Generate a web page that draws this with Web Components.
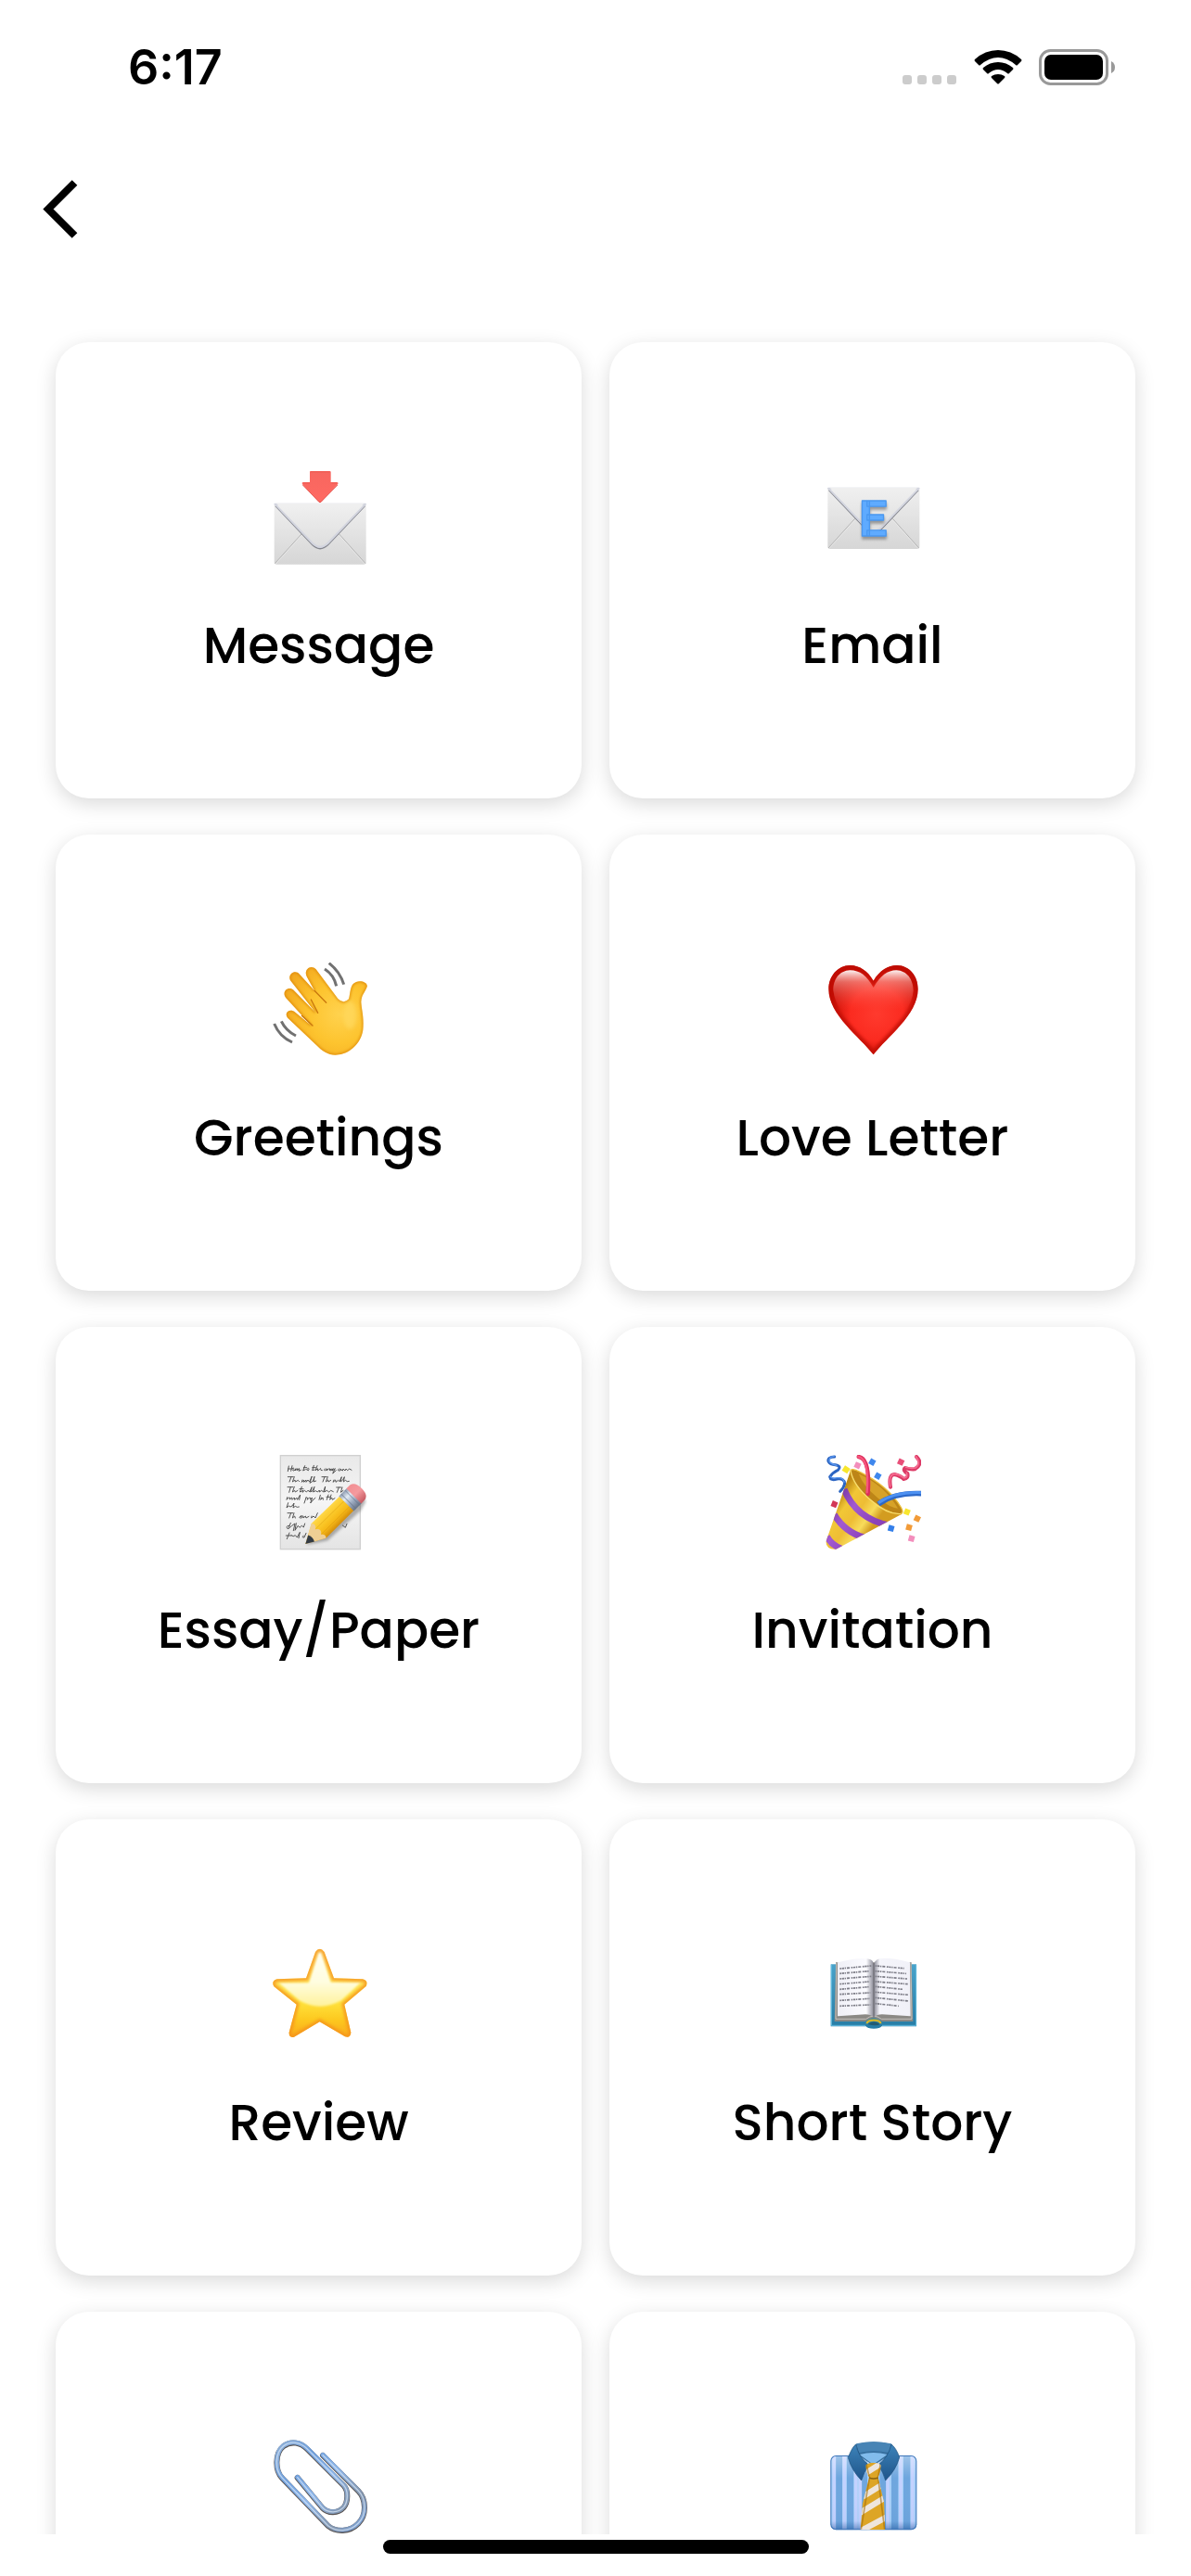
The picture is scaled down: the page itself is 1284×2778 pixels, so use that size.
<!DOCTYPE html>
<html lang="en">
<head>
<meta charset="utf-8">
<meta name="viewport" content="width=device-width, initial-scale=1">
<title>Categories</title>
<style>
  html, body { margin: 0; height: 100%; background: #fff; color: #000; }
  body { font-family: Poppins, Inter, "Liberation Sans", sans-serif; }
  category-card svg { display: block; width: 100%; height: 100%; }
</style>
</head>
<body>
<app-screen>
  <status-bar slot="top">6:17</status-bar>
  <nav-bar slot="top"></nav-bar>

  <category-card>
    <svg slot="icon" viewBox="64 48 312 312" aria-hidden="true">
      <defs>
        <linearGradient id="paper" x1="0" y1="0" x2="0" y2="1"><stop offset="0" stop-color="#efefef"/><stop offset="1" stop-color="#d6d6d6"/></linearGradient>
        <linearGradient id="flap" x1="0" y1="0" x2="0" y2="1"><stop offset="0" stop-color="#f0f0f0"/><stop offset="1" stop-color="#dedede"/></linearGradient>
        <linearGradient id="arrow" x1="0" y1="0" x2="0" y2="1"><stop offset="0" stop-color="#f7665f"/><stop offset="1" stop-color="#ff6a62"/></linearGradient>
      </defs>
      <rect x="75" y="156" width="297" height="197" rx="7" fill="url(#paper)"/>
      <path d="M77 350 163 255M370 350 285 255" stroke="#b4b4b4" stroke-width="3"/>
      <path d="M79 352 163 259M368 352 285 259" stroke="#f3f3f3" stroke-width="1.5"/>
      <path d="M79 163 199 290Q223 313 248 290L368 163" fill="none" stroke="#85878f" stroke-width="5"/>
      <path d="M77 158 199 285Q223 308 248 285L370 158Z" fill="url(#flap)" stroke="#d3d5df" stroke-width="6" stroke-linejoin="round"/>
      <path d="M82 156H365L352 168H95Z" fill="#efefef"/>
      <path d="M190 53Q190 51 193 51H254Q258 51 258 54V87H278Q284 88 281 93L227 151Q223 156 219 151L167 95Q162 88 169 87H190Z" fill="url(#arrow)"/>
      <path d="M192 54H255M169 90H190M260 90H279" stroke="#e8594f" stroke-width="3" opacity=".7"/>
      <path d="M167 96 219 150Q223 154 227 150L280 96" fill="none" stroke="#e04a42" stroke-width="3" opacity=".8"/>
    </svg>
    Message
  </category-card>

  <category-card>
    <svg slot="icon" viewBox="56 48 312 312" aria-hidden="true">
      <rect x="66" y="105" width="297" height="198" rx="7" fill="url(#paper)"/>
      <path d="M68 300 154 205M361 300 276 205" stroke="#b4b4b4" stroke-width="3"/>
      <path d="M70 302 154 209M359 302 276 209" stroke="#f3f3f3" stroke-width="1.5"/>
      <path d="M70 112 190 239Q214 262 239 239L359 112" fill="none" stroke="#7d7f87" stroke-width="5"/>
      <path d="M68 107 190 234Q214 257 239 234L361 107Z" fill="url(#flap)" stroke="#d3d5df" stroke-width="6" stroke-linejoin="round"/>
      <path d="M73 105H356L343 117H86Z" fill="#efefef"/>
      <g font-family="Roboto, 'Liberation Sans', sans-serif" font-weight="700" font-size="162" stroke-width="4" stroke-linejoin="round">
        <text x="168" y="269" fill="#777" stroke="#777" opacity=".7" style="filter:blur(4px)" aria-hidden="true">E</text>
        <text x="167" y="261" fill="#5fabff" stroke="#4a98f0">E</text>
      </g>
    </svg>
    Email
  </category-card>

  <category-card>
    <svg slot="icon" viewBox="64 54 312 312" aria-hidden="true">
      <defs>
        <radialGradient id="skin" gradientUnits="userSpaceOnUse" cx="285" cy="220" r="190"><stop offset="0" stop-color="#ffd24e"/><stop offset=".5" stop-color="#fdc42f"/><stop offset="1" stop-color="#f3a91f"/></radialGradient>
        <path id="hand" d="M127 112C117 93 142 74 157 92L205 145L181 101C168 79 192 57 210 76L281 171Q300 190 316 172C322 151 319 124 340 117C357 111 379 120 375 133C369 151 358 156 356 181C357 206 366 229 362 272C356 314 322 346 284 352C256 357 233 344 211 321L120 235C103 216 126 201 143 215L194 257L113 169C97 149 119 129 136 142L208 215Z"/>
        <clipPath id="handClip"><use href="#hand"/></clipPath>
      </defs>
      <use href="#hand" fill="url(#skin)"/>
      <g clip-path="url(#handClip)">
        <use href="#hand" fill="none" stroke="#d98207" stroke-width="9" opacity=".6" style="filter:blur(3px)"/>
        <ellipse cx="320" cy="225" rx="22" ry="45" fill="#ffdc66" opacity=".6" style="filter:blur(6px)"/>
      </g>
      <path d="M205 145 243 184M194 174 216 217M164 226 199 258" stroke="#c9780d" stroke-width="4" stroke-linecap="round" fill="none"/>
      <g fill="none" stroke="#717171" stroke-width="9"><path d="M238 75Q268 94 276 130"/><path d="M252 56Q287 83 300 125"/><path d="M98 244Q112 274 145 291"/><path d="M75 252Q92 294 133 312"/></g>
    </svg>
    Greetings
  </category-card>

  <category-card>
    <svg slot="icon" viewBox="56 54 312 312" aria-hidden="true">
      <defs>
        <radialGradient id="heart" gradientUnits="userSpaceOnUse" cx="225" cy="220" r="155"><stop offset="0" stop-color="#ff3a2e"/><stop offset=".55" stop-color="#fb2b20"/><stop offset="1" stop-color="#c40b02"/></radialGradient>
        <linearGradient id="shine" x1="0" y1="0" x2="0" y2="1"><stop offset="0" stop-color="#fff" stop-opacity=".95"/><stop offset=".3" stop-color="#ffb0a8" stop-opacity=".55"/><stop offset="1" stop-color="#ff5a4e" stop-opacity="0"/></linearGradient>
        <path id="heartShape" d="M214 113C235 78 262 63 290 63C331 64 358 98 358 140C357 224 258 294 214 352C170 294 70 224 69 140C69 98 99 63 138 63C170 64 195 81 214 113Z"/>
        <clipPath id="heartClip"><use href="#heartShape"/></clipPath>
      </defs>
      <use href="#heartShape" fill="url(#heart)"/>
      <g clip-path="url(#heartClip)"><use href="#heartShape" fill="none" stroke="#bd0e05" stroke-width="22" opacity=".75" style="filter:blur(4px)"/></g>
      <path d="M214 135C193 97 170 79 138 79C104 80 83 109 84 145Q88 178 108 207H320Q340 178 343 145C343 109 322 80 288 79C260 79 236 97 214 135Z" fill="url(#shine)"/>
    </svg>
    Love Letter
  </category-card>

  <category-card>
    <svg slot="icon" viewBox="64 59 312 312" aria-hidden="true">
      <defs>
        <linearGradient id="sheet" x1="0" y1="0" x2="0" y2="1"><stop offset="0" stop-color="#e9e9e9"/><stop offset=".5" stop-color="#f5f5f5"/><stop offset="1" stop-color="#e4e4e4"/></linearGradient>
        <linearGradient id="pencil" x1="0" y1="0" x2="1" y2="0"><stop offset="0" stop-color="#ffd84a"/><stop offset=".35" stop-color="#fbc92a"/><stop offset=".7" stop-color="#f5b716"/><stop offset="1" stop-color="#d48d0b"/></linearGradient>
        <linearGradient id="ferrule" x1="0" y1="0" x2="1" y2="0"><stop offset="0" stop-color="#8d9bb0"/><stop offset=".3" stop-color="#e3ebf5"/><stop offset=".65" stop-color="#9caac0"/><stop offset="1" stop-color="#687386"/></linearGradient>
        <linearGradient id="rubber" x1="0" y1="0" x2="1" y2="0"><stop offset="0" stop-color="#f28f93"/><stop offset=".5" stop-color="#f59a9e"/><stop offset="1" stop-color="#c75b63"/></linearGradient>
      </defs>
      <rect x="95" y="61" width="258" height="303" fill="url(#sheet)" stroke="#d0d0d0" stroke-width="4"/>
      <g fill="none" stroke="#4a4a4a" stroke-width="2.8" stroke-linecap="round" stroke-linejoin="round">
        <path d="M122 95 119 112M133 94 129 111M120 104H132Q139 98 138 103Q132 111 139 110L145 103 143 110 150 103 149 109 156 103 154 111 161 108M174 94 168 110 176 106M170 100H180M180 106Q188 98 187 106T180 106M203 93 198 109 205 107M198 100H209M214 94 208 110 215 103 216 110 222 105Q226 100 225 105T230 109M240 103Q233 108 239 110L246 104 244 110 251 104Q257 101 254 109L260 104 258 110 266 103 263 110 272 103 264 119 275 109M284 104Q278 111 286 110T288 104L296 110 298 104 304 110 307 104 312 109 318 104 325 108"/>
        <path d="M119 130H137M130 130 124 146M140 130 134 146 142 140 143 146 152 141 156 145M166 140 164 147 171 140 171 147 178 140 178 147 184 140 189 146 197 128 190 150 201 143 205 129 202 146 210 143M229 130H245M238 130 232 146M248 130 242 146 249 140 250 146 258 141M268 140 265 147 273 140 274 147 282 141 286 145 293 130 289 146 297 140 302 130 299 146 305 141 311 145 317 144"/>
        <path d="M118 163H136M128 163 123 180M140 162 134 179 141 174 143 179 151 174M164 162 158 179 166 175M157 169H169M168 174 166 180 173 174 179 179 185 173 189 179 197 163 192 179 199 175 205 162 201 179 209 175 215 179 221 173 221 179 228 174 234 179 240 161 237 179 245 174 252 179 258 174 266 178M276 164H292M284 164 278 180M295 164 290 180 298 174"/>
        <path d="M117 196 115 204 122 197Q129 196 125 203L132 197 133 204 140 197 141 204 148 198 150 204 159 188 156 204M178 197 172 215M178 197Q187 196 181 204L188 198Q196 196 192 204L198 197 192 215 202 203 208 198M224 189 220 204M227 197 225 204 232 197 233 204M250 188 245 204M244 195H256M259 188 255 204 261 197 263 204 271 199"/>
        <path d="M120 214 115 230 122 224Q127 230 133 224L139 215 136 230 143 225 149 228 155 227M118 247H136M129 247 123 263M139 247 134 263 141 257 143 263M160 257Q152 263 161 263T160 257L169 257 169 263 176 257 178 263 187 258M196 257 195 263 202 257 208 263 215 247"/>
        <path d="M128 279 122 294M124 288Q114 287 116 295T132 288L142 281 137 304M146 280 142 303 152 288 157 294 164 288 170 293 174 281M124 311 116 331M113 320H130M130 319Q137 326 143 319L149 326 158 309 154 328M170 320Q162 327 172 326L178 312M296 287 305 294 310 282"/>
      </g>
      <path d="M178 350 352 190 372 208 354 240 248 336Z" fill="#555" opacity=".45" style="filter:blur(4px)"/>
      <g transform="translate(176 347) rotate(45)">
        <path d="M0 0 -33 -60 -31 -188H34L34 -60Z" fill="url(#pencil)"/>
        <path d="M0 0 -33 -60Q-20 -72 -11 -56Q3 -74 14 -57Q24 -70 34 -60Z" fill="#efcf94"/>
        <path d="M0 0-14-26Q0-33 15-26Z" fill="#333b44"/>
        <path d="M-11-58-10-188M14-59 15-188" stroke="#cf8e0d" stroke-width="2" opacity=".55"/>
        <rect x="-33" y="-222" width="68" height="36" fill="url(#ferrule)"/>
        <path d="M-33-213H35M-33-196H35" stroke="#64748e" stroke-width="3" opacity=".6"/>
        <path d="M-33-220V-236Q-30-256 1-256Q32-256 35-236V-220Z" fill="url(#rubber)"/>
      </g>
    </svg>
    Essay/Paper
  </category-card>

  <category-card>
    <svg slot="icon" viewBox="56 59 312 312" aria-hidden="true">
      <defs>
        <linearGradient id="cone" gradientUnits="userSpaceOnUse" x1="95" y1="200" x2="215" y2="285"><stop offset="0" stop-color="#c08a14"/><stop offset=".25" stop-color="#f2c736"/><stop offset=".55" stop-color="#eebd35"/><stop offset=".8" stop-color="#f8dc5b"/><stop offset="1" stop-color="#d39c20"/></linearGradient>
        <linearGradient id="band" gradientUnits="userSpaceOnUse" x1="95" y1="200" x2="215" y2="285"><stop offset="0" stop-color="#7d3ba8"/><stop offset=".4" stop-color="#a259d0"/><stop offset="1" stop-color="#8a42ba"/></linearGradient>
        <clipPath id="coneClip"><path d="M140 109 60 340Q62 366 93 364L306 250Q243 215 140 109Z"/></clipPath>
      </defs>
      <path d="M140 109Q147 101 170 114Q263 160 304 230Q314 248 299 251Q264 252 198 200Q137 143 140 109Z" fill="#bd8517" stroke="#edc13c" stroke-width="4"/>
      <path d="M166 120Q250 158 293 232Q268 230 230 200Q180 160 166 120Z" fill="#d7a228"/>
      <path d="M166 65Q204 70 196 185" fill="none" stroke="#dc2f5c" stroke-width="13" stroke-linecap="round"/>
      <path d="M165 65Q201 70 193 180" fill="none" stroke="#f6557d" stroke-width="7" stroke-linecap="round"/>
      <path d="M230 218Q282 180 369 184" fill="none" stroke="#2c68c8" stroke-width="17"/>
      <path d="M230 214Q282 178 369 181" fill="none" stroke="#4d91f2" stroke-width="9"/>
      <g clip-path="url(#coneClip)">
        <path d="M140 109Q149 157 207 207Q257 252 306 250L306 370H50V109Z" fill="url(#cone)"/>
        <g fill="none" stroke="url(#band)" stroke-width="21"><path d="M119 170Q158 266 265 287"/><path d="M87 252Q123 310 184 326"/><path d="M63 323Q79 352 111 363"/></g>
      </g>
      <path d="M140 109Q147 157 207 207Q257 252 302 250" fill="none" stroke="#f7dc6c" stroke-width="4"/>
      <g fill="none" stroke-linecap="round" stroke-linejoin="round">
        <path d="M88 65Q65 66 68 80Q73 91 91 91Q112 95 99 108Q83 115 73 130Q75 143 96 137Q120 134 121 152Q117 168 106 177" stroke="#2b64c2" stroke-width="9"/>
        <path d="M87 63Q68 66 71 80Q78 89 95 93M75 129Q79 136 97 133Q117 132 119 147" stroke="#5a97ef" stroke-width="4"/>
        <path d="M269 163Q262 123 282 122Q302 127 312 137Q328 135 324 119Q307 108 317 101Q330 106 348 105Q376 88 353 65" stroke="#dc3a66" stroke-width="12"/>
        <path d="M268 161Q261 125 282 120Q301 123 313 134Q327 131 321 117M319 99Q334 104 350 101Q369 87 351 64" stroke="#f66d91" stroke-width="5"/>
      </g>
      <g stroke-width="19"><path d="m117 101 17 11" stroke="#f8e62d"/><path d="m154 89 17 8" stroke="#f38ebc"/><path d="m202 78 16 9" stroke="#3f87ed"/><path d="m220 123 16 9" stroke="#3f87ed"/><path d="m294 78 17 8" stroke="#e84f79"/><path d="m79 215 17 7" stroke="#d33757"/><path d="m314 240 17 7" stroke="#f8e62d"/><path d="m347 261 17 8" stroke="#f29b38"/><path d="m320 291 18 5" stroke="#f29b38"/><path d="m262 294 18 5" stroke="#347fea"/><path d="m328 327 18 5" stroke="#f38ebc"/></g>
    </svg>
    Invitation
  </category-card>

  <category-card>
    <svg slot="icon" viewBox="64 64 312 312" aria-hidden="true">
      <defs>
        <linearGradient id="star" x1="0" y1="0" x2="0" y2="1"><stop offset="0" stop-color="#ffeb8a"/><stop offset=".6" stop-color="#ffe23c"/><stop offset=".8" stop-color="#fdc91f"/><stop offset="1" stop-color="#f9a91c"/></linearGradient>
        <linearGradient id="starShine" x1="0" y1="0" x2="0" y2="1"><stop offset="0" stop-color="#fffff2"/><stop offset=".55" stop-color="#fffde0"/><stop offset="1" stop-color="#fff29c"/></linearGradient>
        <path id="starShape" d="M208 79Q222 59 237 79L268 164 361 167Q381 173 372 190L302 249 323 340Q321 359 304 353L222 305 139 354Q122 358 123 339L147 249 74 191Q64 173 84 167L178 164Z"/>
        <clipPath id="starClip"><use href="#starShape"/></clipPath>
      </defs>
      <use href="#starShape" fill="url(#star)"/>
      <g clip-path="url(#starClip)">
        <path d="M218 80H227L258 177H355L292 236Q222 274 156 236L90 179H187Z" fill="url(#starShine)" style="filter:blur(3px)"/>
        <use href="#starShape" fill="none" stroke="#f5931d" stroke-width="17" opacity=".8" style="filter:blur(4px)"/>
      </g>
    </svg>
    Review
  </category-card>

  <category-card>
    <svg slot="icon" viewBox="56 64 312 312" aria-hidden="true">
      <defs>
        <linearGradient id="cover" x1="0" y1="0" x2="0" y2="1"><stop offset="0" stop-color="#4aa3ca"/><stop offset="1" stop-color="#267ca5"/></linearGradient>
        <linearGradient id="leafL" x1="0" y1="0" x2="1" y2="0"><stop offset="0" stop-color="#efeff6"/><stop offset=".8" stop-color="#fbfbff"/><stop offset="1" stop-color="#8c8c98"/></linearGradient>
        <linearGradient id="leafR" x1="0" y1="0" x2="1" y2="0"><stop offset="0" stop-color="#8c8c98"/><stop offset=".15" stop-color="#f5f5fb"/><stop offset="1" stop-color="#f1f1f8"/></linearGradient>
      </defs>
      <path d="M76 119H353V320H240Q236 327 215 327Q194 327 190 320H76Z" fill="url(#cover)"/>
      <path d="M78 121V317H188M352 121V317H242" fill="none" stroke="#65bde0" stroke-width="3"/>
      <path d="M92 113 88 304H188Q214 282 242 304H342L337 113Z" fill="#8b8985"/>
      <path d="M94 115 92 296H190Q214 277 240 296H338L335 115" fill="none" stroke="#c4c1bc" stroke-width="3"/>
      <path d="M98 113Q180 92 205 104Q215 109 214 121V290Q205 281 188 281L98 287Z" fill="url(#leafL)"/>
      <path d="M332 113Q246 91 224 105Q216 110 216 121V290Q225 281 242 281L334 287Z" fill="url(#leafR)"/>
      <path d="M215 115V291" stroke="#6b6b75" stroke-width="3"/>
      <path d="M193 311Q193 300 215 300T237 311" fill="none" stroke="#d4b52d" stroke-width="7"/>
      <path d="M195 313Q215 296 235 313Q224 321 195 313" fill="#245b72"/>
      <g fill="none" stroke="#7c7c86" stroke-width="5" stroke-dasharray="5 2 7 2 4 3 9 5">
        <path d="M105 133 207 124M105 149 201 141M105 166 207 158M105 183 202 175M105 200 199 192M105 216 204 211M105 236 203 230M105 254 204 250"/>
        <path d="M220 124 313 132M220 141 320 149M220 158 323 166M220 175 325 183M220 191 309 200M220 209 329 218M220 227 328 238M220 246 296 254"/>
      </g>
    </svg>
    Short Story
  </category-card>

  <category-card>
    <svg slot="icon" viewBox="64 68 312 312" role="img" aria-label="Paperclip">
      <defs>
        <linearGradient id="wire" gradientUnits="userSpaceOnUse" x1="80" y1="90" x2="370" y2="350"><stop offset="0" stop-color="#8fb0d8"/><stop offset=".25" stop-color="#6f9fdc"/><stop offset=".5" stop-color="#8db6ea"/><stop offset=".8" stop-color="#8294ac"/><stop offset="1" stop-color="#7ba4dc"/></linearGradient>
        <path id="clip" d="M232 117 347 232C372 258 375 309 347 337C319 366 275 366 249 345L101 191C76 165 77 109 105 87C130 69 160 75 181 96L300 215C315 231 314 267 300 285C282 305 249 306 231 287L150 189"/>
      </defs>
      <g fill="none" stroke-linecap="round" stroke-linejoin="round">
        <use href="#clip" y="2" stroke="#55504f" stroke-width="18"/>
        <use href="#clip" stroke="url(#wire)" stroke-width="15"/>
        <use href="#clip" y="1" stroke="#dceafa" stroke-width="4" opacity=".7"/>
      </g>
    </svg>
  </category-card>

  <category-card>
    <svg slot="icon" viewBox="56 68 312 312" role="img" aria-label="Shirt and tie">
      <defs>
        <linearGradient id="collar" x1="0" y1="0" x2="0" y2="1"><stop offset="0" stop-color="#3d83b9"/><stop offset="1" stop-color="#1e5489"/></linearGradient>
        <linearGradient id="shirtShade" x1="0" y1="0" x2="0" y2="1"><stop offset="0" stop-color="#fff" stop-opacity=".35"/><stop offset=".3" stop-color="#fff" stop-opacity="0"/><stop offset=".88" stop-color="#245a9d" stop-opacity=".04"/><stop offset="1" stop-color="#174b91" stop-opacity=".5"/></linearGradient>
        <clipPath id="shirtClip"><rect x="75" y="119" width="279" height="241" rx="18"/></clipPath>
        <clipPath id="tieClip"><path d="M190 149Q214 136 237 149Q239 172 229 190L248 270 252 359H172L179 275 200 190Q188 171 190 149Z"/></clipPath>
      </defs>
      <g clip-path="url(#shirtClip)">
        <rect x="75" y="119" width="279" height="241" fill="#a6cff8"/>
        <path d="M102 119V360M139 119V360M183 119V360M245 119V360M283 119V360M322 119V360" stroke="#6ea6de" stroke-width="22"/>
        <path d="M87 119V360M120 119V360M157 119V360M171 119V360M260 119V360M302 119V360M340 119V360" stroke="#c3d2ff" stroke-width="11"/>
        <rect x="75" y="119" width="279" height="241" fill="url(#shirtShade)"/>
        <rect x="75" y="119" width="279" height="241" rx="18" fill="none" stroke="#3e76b9" stroke-width="6"/>
      </g>
      <path d="M157 83Q215 66 274 83L263 120 214 151 166 120Z" fill="#376f9e"/>
      <path d="M169 116Q214 104 259 116L213 148Z" fill="#82bcec"/>
      <path d="M158 81Q213 68 272 81L264 110Q214 99 168 110Z" fill="#4784b5"/>
      <path d="M157 83Q146 90 132 126Q143 167 175 200Q182 174 199 150Q166 126 157 83ZM272 83Q287 94 298 125Q287 166 253 200Q246 173 229 150Q261 127 272 83Z" fill="url(#collar)" stroke="#184b79" stroke-width="2"/>
      <g clip-path="url(#tieClip)"><rect x="165" y="140" width="95" height="225" fill="#dda526"/><path d="M183 180 240 144M179 253 252 207M167 307 260 250M165 367 263 315" stroke="#eee5dc" stroke-width="19"/><path d="M199 191Q214 197 230 191" stroke="#88610f" stroke-width="5" fill="none"/><path d="M190 145Q197 174 201 190L174 358M237 145 229 190 250 358" fill="none" stroke="#a26c08" stroke-width="5" opacity=".6"/></g>
    </svg>
  </category-card>

  <home-indicator slot="bottom"></home-indicator>
</app-screen>

<script>
  class ShadowElement extends HTMLElement {
    constructor() {
      super();
      this.attachShadow({ mode: "open" }).innerHTML = this.constructor.markup;
    }
  }

  class AppScreen extends ShadowElement {
    static markup = `
      <style>
        :host { display: flex; flex-direction: column; height: 100vh; overflow: hidden; background: #fff; }
        main { flex: 1; min-height: 0; overflow: hidden; }
        .grid { display: grid; grid-template-columns: 1fr 1fr; gap: 39px 30px; padding: 60px; }
      </style>
      <slot name="top"></slot>
      <main><div class="grid"><slot></slot></div></main>
      <slot name="bottom"></slot>`;
  }

  class StatusBar extends ShadowElement {
    static markup = `
      <style>
        :host { display: flex; box-sizing: border-box; height: 141px; padding: 44px 80px 0 138px; align-items: flex-start; justify-content: space-between; }
        .time { font: 600 52px/58px Inter, "Liberation Sans", sans-serif; }
        svg { display: block; width: 232px; height: 60px; }
      </style>
      <span class="time"><slot></slot></span>
      <svg viewBox="972 44 232 60" role="img" aria-label="No signal, Wi-Fi, battery full">
        <g fill="#ccc"><rect x="973" y="81" width="10" height="10" rx="3"/><rect x="989" y="81" width="10" height="10" rx="3"/><rect x="1005" y="81" width="10" height="10" rx="3"/><rect x="1021" y="81" width="10" height="10" rx="3"/></g>
        <path d="M1076 54Q1090 54 1101 64Q1102 65 1101 66L1097 70Q1096 71 1095 70Q1076 54 1057 70Q1056 71 1055 70L1051 66Q1050 65 1051 64Q1062 54 1076 54ZM1076 67Q1085 67 1092 73Q1093 74 1092 75L1088 79Q1087 80 1086 79Q1076 71 1066 79Q1065 80 1064 79L1060 75Q1059 74 1060 73Q1067 67 1076 67ZM1076 80Q1080 80 1083 82Q1084 83 1083 84L1077 90Q1076 91 1075 90L1069 84Q1068 83 1069 82Q1072 80 1076 80Z"/>
        <rect x="1121.500" y="54.500" width="72" height="36" rx="11" fill="none" stroke="#999" stroke-width="3"/>
        <rect x="1126" y="59" width="63" height="27" rx="7"/>
        <path d="M1198 66Q1202 68 1202 72.500T1198 79Z" fill="#999"/>
      </svg>`;
  }

  class NavBar extends ShadowElement {
    static markup = `
      <style>
        :host { display: flex; height: 168px; align-items: center; padding: 0 24px; }
        button { display: grid; place-items: center; width: 84px; height: 84px; padding: 0; border: 0; background: none; color: inherit; }
        svg { display: block; width: 84px; height: 84px; }
      </style>
      <button type="button" aria-label="Back">
        <svg viewBox="0 0 84 84"><path d="M56.500 14 28 42.500 56.500 71" fill="none" stroke="currentColor" stroke-width="8"/></svg>
      </button>`;
  }

  class CategoryCard extends ShadowElement {
    static markup = `
      <style>
        :host { display: block; min-width: 0; }
        button { display: flex; flex-direction: column; align-items: center; gap: 45px; box-sizing: border-box; width: 100%; margin: 0; padding: 138px 0 125px; border: 0; border-radius: 36px; background: #fff; box-shadow: 0 6px 21px rgba(0, 0, 0, .15); color: inherit; font: 500 55px/80px Poppins, Inter, "Liberation Sans", sans-serif; }
        .icon { width: 104px; height: 104px; }
        .label { min-height: 80px; white-space: nowrap; }
      </style>
      <button type="button">
        <span class="icon"><slot name="icon"></slot></span>
        <span class="label"><slot></slot></span>
      </button>`;
  }

  class HomeIndicator extends ShadowElement {
    static markup = `
      <style>
        :host { display: flex; justify-content: center; padding: 6px 0 24px; background: #fff; }
        span { width: 459px; height: 15px; border-radius: 8px; background: #000; }
      </style>
      <span></span>`;
  }

  customElements.define("app-screen", AppScreen);
  customElements.define("status-bar", StatusBar);
  customElements.define("nav-bar", NavBar);
  customElements.define("category-card", CategoryCard);
  customElements.define("home-indicator", HomeIndicator);
</script>
</body>
</html>
